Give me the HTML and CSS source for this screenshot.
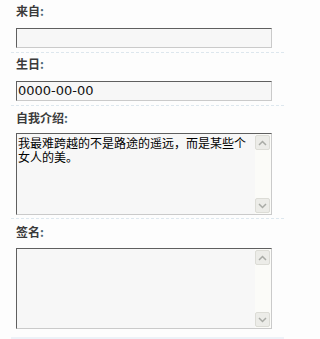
FILE: index.html
```html
<!DOCTYPE html>
<html lang="zh">
<head>
<meta charset="utf-8">
<link rel="stylesheet" href="styles.css">
</head>
<body>
<div class="form">
  <div class="row row-a">
    <div class="label">来自<span class="colon">:</span></div>
    <div class="input"></div>
  </div>
  <div class="row row-a">
    <div class="label">生日<span class="colon">:</span></div>
    <div class="input">0000-00-00</div>
  </div>
  <div class="row row-b">
    <div class="label">自我介绍<span class="colon">:</span></div>
    <div class="area area-b">
      <div class="area-text">我最难跨越的不是路途的遥远，而是某些个女人的美。</div>
      <div class="sbar">
        <div class="sbtn"><svg width="9" height="6" viewBox="0 0 9 6"><path d="M1 5 L4.5 1.5 L8 5" fill="none" stroke="#a9aba6" stroke-width="1.5"/></svg></div>
        <div class="sbtn"><svg width="9" height="6" viewBox="0 0 9 6"><path d="M1 1 L4.5 4.5 L8 1" fill="none" stroke="#a9aba6" stroke-width="1.5"/></svg></div>
      </div>
    </div>
  </div>
  <div class="row row-c">
    <div class="label">签名<span class="colon">:</span></div>
    <div class="area area-c">
      <div class="area-text"></div>
      <div class="sbar">
        <div class="sbtn"><svg width="9" height="6" viewBox="0 0 9 6"><path d="M1 5 L4.5 1.5 L8 5" fill="none" stroke="#a9aba6" stroke-width="1.5"/></svg></div>
        <div class="sbtn"><svg width="9" height="6" viewBox="0 0 9 6"><path d="M1 1 L4.5 4.5 L8 1" fill="none" stroke="#a9aba6" stroke-width="1.5"/></svg></div>
      </div>
    </div>
  </div>
  <div class="band"></div>
</div>
</body>
</html>
```

FILE: styles.css
```css
html, body {
  margin: 0;
  padding: 0;
  background: #fdfdfd;
}
body {
  font-family: "Noto Sans CJK SC", "DejaVu Sans", sans-serif;
  font-size: 12px;
  color: #000;
}
.form {
  margin-left: 11px;
  width: 273px;
}
.row {
  padding-left: 5px;
  border-bottom: 1px dashed #dde7ee;
}
.row-a {
  padding-top: 4px;
  padding-bottom: 4px;
}
.row-b {
  padding-top: 5px;
  padding-bottom: 3px;
}
.row-c {
  padding-top: 6px;
  padding-bottom: 4px;
  border-bottom: none;
}
.label {
  font-weight: bold;
  color: #3a3a3a;
  height: 14px;
  line-height: 14px;
  font-size: 12px;
  margin-bottom: 10px;
}
.row-b .label { margin-bottom: 8px; }
.row-c .label { margin-bottom: 9px; }
.colon {
  color: #4c6877;
}
.input {
  box-sizing: border-box;
  width: 256px;
  height: 20px;
  background: #f7f7f7;
  border: 1px solid;
  border-color: #5f5f5f #cacaca #cacaca #5f5f5f;
  font-family: "DejaVu Sans", sans-serif;
  font-size: 13px;
  line-height: 18px;
  padding-left: 1px;
  color: #111;
}
.area {
  box-sizing: border-box;
  width: 256px;
  display: flex;
  background: #f7f7f7;
  border: 1px solid;
  border-color: #5f5f5f #cacaca #cacaca #5f5f5f;
}
.area-b { height: 82px; }
.area-c { height: 81px; }
.area-text {
  flex: 1;
  padding: 2px 0 0 1px;
  font-size: 12px;
  line-height: 14px;
  color: #000;
  word-break: break-all;
}
.sbar {
  width: 16px;
  background: #fbfbf8;
  display: flex;
  flex-direction: column;
  justify-content: space-between;
  padding: 1px 0;
  box-sizing: border-box;
}
.sbtn {
  box-sizing: border-box;
  width: 15px;
  height: 15px;
  border: 1px solid #dcdcd6;
  border-radius: 2px;
  background: #ecece8;
  display: flex;
  align-items: center;
  justify-content: center;
}
.band {
  margin-top: 4px;
  height: 6px;
  background: #edf2f8;
}
```
